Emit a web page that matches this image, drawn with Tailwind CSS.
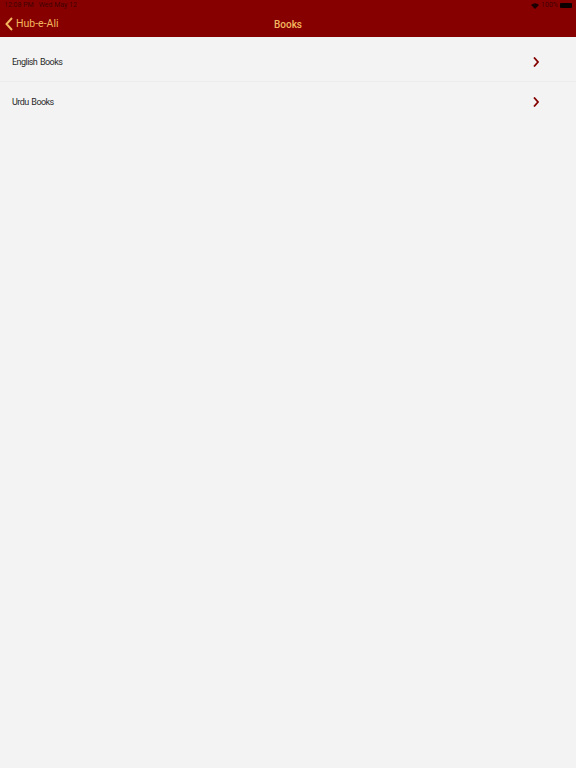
<!DOCTYPE html>
<html lang="en">
<head>
  <meta charset="UTF-8">
  <meta name="viewport" content="width=device-width, initial-scale=1.0">
  <title>Books</title>
  <script src="https://cdn.jsdelivr.net/npm/@tailwindcss/browser@4"></script>
</head>
<body class="h-[768px] overflow-hidden bg-[#f3f3f3] font-['Roboto','Liberation_Sans',sans-serif] text-[#2a2a2a]">
  <!-- Nav bar with status row -->
  <header class="h-[37px] bg-[#860000] flex flex-col">
    <div class="h-[11px] px-[4px] flex items-center justify-between text-[7px] leading-none text-black/55">
      <div class="flex gap-[5px]">
        <span>12:08 PM</span>
        <span>Wed May 12</span>
      </div>
      <div class="flex items-center gap-[2px]">
        <svg class="w-[8px] h-[6px]" viewBox="0 0 16 12"><path d="M8 12 L0 4 Q8 -3 16 4 Z" fill="#1a0000"/></svg>
        <span>100%</span>
        <div class="w-[12px] h-[5px] rounded-[1px] bg-black/90"></div>
      </div>
    </div>
    <div class="relative flex-1 flex items-center justify-center pt-[1px]">
      <div class="absolute left-[5px] top-[6px] flex items-center gap-[3px] text-[#f3b75f]">
        <svg class="w-[8px] h-[14px]" viewBox="0 0 8 14" fill="none" stroke="#f3b75f" stroke-width="2"><path d="M7 1 L1.5 7 L7 13"/></svg>
        <span class="text-[10.5px] leading-none pt-[1px]">Hub-e-Ali</span>
      </div>
      <h1 class="text-[10px] font-medium text-[#f3b75f]">Books</h1>
    </div>
  </header>

  <!-- Book list -->
  <ul class="text-[9px] tracking-[-0.55px] [word-spacing:1px]">
    <li class="h-[44px] pl-[12px] pr-[37px] pt-[6px] flex items-center justify-between">
      <span class="pt-[1px]">English Books</span>
      <svg class="w-[6px] h-[10px]" viewBox="0 0 6 10" fill="none" stroke="#840000" stroke-width="1.8"><path d="M1 0.5 L5 5 L1 9.5"/></svg>
    </li>
    <li class="h-[40px] pl-[12px] pr-[37px] pt-[1px] border-t border-[#ececec] flex items-center justify-between">
      <span class="pt-[1px]">Urdu Books</span>
      <svg class="w-[6px] h-[10px]" viewBox="0 0 6 10" fill="none" stroke="#840000" stroke-width="1.8"><path d="M1 0.5 L5 5 L1 9.5"/></svg>
    </li>
  </ul>
</body>
</html>
